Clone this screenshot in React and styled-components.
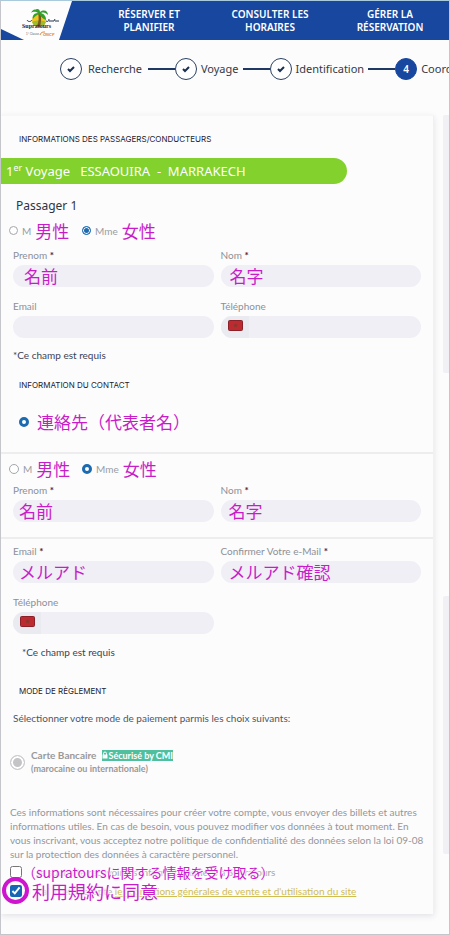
import React from 'react'
import styled, { createGlobalStyle, css } from 'styled-components'

const wide = '"Noto Sans", "Open Sans", sans-serif'
const cjk = '"Noto Sans CJK JP", sans-serif'
const pink = '#c81cc8'

const GlobalStyle = createGlobalStyle`
  * {
    box-sizing: border-box;
  }
  body {
    margin: 0;
    background: #fcfcfd;
    color: #3c4250;
    font-family: Lato, "Noto Sans CJK JP", sans-serif;
    font-size: 10px;
    line-height: 14px;
  }
  input, button {
    font-family: inherit;
    margin: 0;
  }
`

const Page = styled.div`
  min-height: 100vh;
  border: 1px solid #c4c6cb;
  border-top-color: #a9c9dc;
  overflow: hidden;
`

const Header = styled.header`
  display: flex;
  height: 39px;
  background: #17479e;
`

const Logo = styled.a`
  flex: none;
  width: 72px;
  svg {
    display: block;
  }
`

const Nav = styled.nav`
  flex: 1;
  display: grid;
  grid-template-columns: 152px 90px 1fr;
  align-items: center;
  a {
    color: #fff;
    font: 600 10px/13px ${wide};
    text-align: center;
    text-decoration: none;
    white-space: pre-line;
  }
  a:last-child {
    padding-left: 16px;
  }
`

const Steps = styled.ol`
  display: flex;
  align-items: center;
  height: 58px;
  margin: 0 0 17px;
  padding: 0 0 0 59px;
  list-style: none;
  overflow: hidden;
`

const Step = styled.li`
  flex: none;
  display: flex;
  align-items: center;
  gap: ${p => p.$gap || 4}px;
  font: 11px/16px ${wide};
  color: #333a48;
  &:not(:last-child)::after {
    content: '';
    width: 27px;
    height: 2px;
    background: #1f3864;
  }
`

const StepMark = styled.span`
  display: flex;
  align-items: center;
  justify-content: center;
  width: 22px;
  height: 22px;
  border: 1px solid #2b4160;
  border-radius: 50%;
  background: #fff;
  font-size: 10px;
  ${p => p.$active && css`
    border-color: #17479e;
    background: #17479e;
    color: #fff;
    font-weight: 600;
  `}
`

const Content = styled.main`
  display: grid;
  grid-template-columns: minmax(0, 1fr) 6px;
  column-gap: 9px;
`

const Card = styled.form`
  border-right: 1px solid #f1f1f4;
  border-top: 1px solid #f7f7f9;
  box-shadow: 0 2px 6px rgba(40, 40, 70, 0.12);
  background: #fcfcfd;
  padding-bottom: 14px;
`

const Aside = styled.aside`
  display: grid;
  grid-template-rows: 258px 258px;
  row-gap: 223px;
  div {
    background: #f0f0f5;
    border-radius: 2px 0 0 2px;
  }
`

const Section = styled.section`
  margin-top: ${p => p.$gap || 0}px;
  padding: ${p => p.$top || 0}px 12px 0;
  ${p => p.$divided && css`
    border-top: 2px solid #ededf0;
  `}
`

const Title = styled.h2`
  margin: 0;
  padding: ${p => p.$top || 0}px 6px 0;
  font: 8px/12px Inter, sans-serif;
  color: #1d2330;
  text-transform: uppercase;
`

const Banner = styled.h3`
  display: flex;
  align-items: center;
  width: 80%;
  height: 26px;
  margin: 13px 0 12px;
  padding-left: 5px;
  border-radius: 0 13px 13px 0;
  background: #82d12c;
  color: #fff;
  font: 13px/16px ${wide};
  white-space: pre;
  sup {
    font-size: 9px;
    line-height: 8px;
    align-self: flex-start;
    padding-top: 6px;
  }
`

const Passenger = styled.h4`
  margin: 0;
  padding: 0 3px;
  font: 12px/20px ${wide};
  color: #2e3440;
`

const RadioRow = styled.div`
  display: flex;
  align-items: center;
  height: 29px;
  margin: 0 0 ${p => p.$space || 0}px -4px;
  label {
    display: flex;
    align-items: center;
    width: 73px;
    gap: 4px;
    color: #999ca3;
    white-space: nowrap;
  }
`

const Radio = styled.input.attrs({ type: 'radio' })`
  appearance: none;
  flex: none;
  width: ${p => p.$size || 9}px;
  height: ${p => p.$size || 9}px;
  border: 1px solid ${p => p.$grey ? '#c9c9cc' : '#a3a6ab'};
  border-radius: 50%;
  background: #fff;
  &:checked {
    border-color: ${p => p.$grey ? '#c9c9cc' : '#1c6bb0'};
    background: ${p => p.$grey ? '#c4c4c7' : '#1c6bb0'};
    box-shadow: inset 0 0 0 ${p => p.$grey ? 2 : 1}px #fff;
  }
  ${p => p.$bold && css`
    &:checked {
      border-width: 3px;
      background: #fff;
      box-shadow: none;
    }
  `}
`

const Note = styled.span`
  color: ${pink};
  font-family: ${cjk};
  font-size: 17px;
  line-height: 20px;
  white-space: nowrap;
`

const Fields = styled.div`
  display: grid;
  grid-template-columns: repeat(2, minmax(0, 1fr));
  gap: 12px 7px;
`

const Field = styled.div`
  label {
    display: block;
    height: 17px;
    color: #8d9097;
    white-space: nowrap;
  }
  b {
    color: #5b1a26;
  }
`

const Pill = styled.div`
  display: flex;
  height: 22px;
  border-radius: 11px;
  background: #efeff5;
  overflow: hidden;
  input {
    flex: 1;
    min-width: 0;
    height: 22px;
    padding: 0 0 0 ${p => p.$inset || 6}px;
    border: 0;
    outline: 0;
    background: transparent;
    color: ${pink};
    font: 17px/22px ${cjk};
  }
`

const FlagButton = styled.button`
  display: flex;
  width: 28px;
  padding: 4px 0 0 7px;
  border: 0;
  background: #eaeaf1;
`

const Required = styled.p`
  margin: 0;
  padding: ${p => p.$indent ? '11px 9px 0' : '10px 0 0'};
  color: #3c4250;
`

const ContactChoice = styled.label`
  display: flex;
  align-items: center;
  gap: 8px;
  height: 20px;
  margin: 21px 0 20px 6px;
`

const Intro = styled.p`
  margin: 14px 0 23px;
  color: #50555f;
`

const Payment = styled.label`
  display: flex;
  align-items: center;
  gap: 6px;
  margin-left: -3px;
  font-weight: 700;
  color: #999;
  small {
    display: block;
    font-size: 9px;
    line-height: 14px;
  }
`

const Secure = styled.span`
  display: inline-flex;
  align-items: center;
  height: 11px;
  margin-left: 6px;
  background: #4fbf9d;
  color: #fff;
  font-size: 9px;
  line-height: 11px;
  white-space: nowrap;
`

const Legal = styled.p`
  margin: 29px 0 1px -3px;
  color: #94969b;
  white-space: pre;
`

const CheckRow = styled.div`
  position: relative;
  display: flex;
  align-items: center;
  gap: 14px;
  height: 19px;
  margin-left: -3px;
  color: #a4a6aa;
  white-space: nowrap;
  a {
    color: #d0bd52;
  }
`

const Checkbox = styled.input.attrs({ type: 'checkbox' })`
  width: 12px;
  height: 12px;
  accent-color: #1766b5;
`

const Overlay = styled.span`
  position: absolute;
  left: ${p => p.$left}px;
  top: 50%;
  transform: translateY(-50%);
  color: ${pink};
  font: ${p => p.$size}px/20px ${cjk};
  text-shadow: 0 0 2px #fff, 0 0 2px #fff, 0 0 3px #fff, 0 0 3px #fff;
  pointer-events: none;
`

const Ring = styled.span`
  position: absolute;
  left: -8px;
  top: -4px;
  width: 27px;
  height: 27px;
  border: 4px solid #cf14cf;
  border-radius: 50%;
  pointer-events: none;
`

const SupratoursLogo = () => (
  <svg width="72" height="39" viewBox="0 0 72 39" role="img" aria-label="Supratours">
    <path d="M0 0H71L58 39H23L0 28Z" fill="#fdfdfd" />
    <circle cx="38" cy="19" r="7" fill="#f3c521" />
    <path d="M31 21C34 19 42 19 45 21L43 25H33Z" fill="#9dbb2e" />
    <path d="M36 25C38 20 38 16 37 12L39 11C41 16 40 21 39 26Z" fill="#795a1d" />
    <path d="M38 12C35 7 32 8 30 12C33 10 35 11 37 12C33 12 31 15 32 18C34 15 36 14 38 13C40 16 42 18 45 19C45 15 43 13 40 12C43 11 45 12 47 14C47 10 43 8 39 11C39 8 36 7 34 9Z" fill="#34a02c" />
    <path d="M26 19C27 21 30 21 31 19M45 20C47 21 48 20 48 18M48 20H53L54 18M54 20H58" fill="none" stroke="#26344c" />
    <text x="21" y="27" fill="#17213b" fontFamily="Liberation Serif, serif" fontSize="6" fontWeight="700">Supratours</text>
    <text x="25" y="34" fill="#555f70" fontFamily="Liberation Sans, sans-serif" fontSize="3">1° Classe</text>
    <path d="M39 34C40 31 42 31 44 31" fill="none" stroke="#e07a2c" />
    <text x="42" y="35" fill="#e07a2c" fontFamily="Liberation Sans, sans-serif" fontSize="4" fontStyle="italic" fontWeight="700">ONCF</text>
  </svg>
)

const Check = () => (
  <svg width="8" height="8" viewBox="0 0 8 8">
    <path d="M1 4L3 6L7 2" fill="none" stroke="#1b2f50" strokeWidth="2" />
  </svg>
)

const Flag = () => (
  <svg width="15" height="11" viewBox="0 0 15 11">
    <rect x="0.5" y="0.5" width="14" height="10" rx="1" fill="#bd2a30" stroke="#8c2028" />
    <path d="M7.5 3.5L8.7 7L5.8 4.9H9.2L6.3 7Z" fill="none" stroke="#75402c" strokeWidth="0.5" />
  </svg>
)

const TextField = ({ id, label, required, value, inset, tel }) => (
  <Field>
    <label htmlFor={id}>{label} {required && <b>*</b>}</label>
    <Pill $inset={inset}>
      {tel && <FlagButton type="button" aria-label="Maroc"><Flag /></FlagButton>}
      <input id={id} type={tel ? 'tel' : 'text'} defaultValue={value} />
    </Pill>
  </Field>
)

const Gender = ({ name, bold, space }) => (
  <RadioRow $space={space}>
    <label><Radio name={name} $size={bold ? 10 : 9} />M <Note>男性</Note></label>
    <label><Radio name={name} $size={bold ? 10 : 9} $bold={bold} defaultChecked />Mme <Note>女性</Note></label>
  </RadioRow>
)

const legal = `Ces informations sont nécessaires pour créer votre compte, vous envoyer des billets et autres
informations utiles. En cas de besoin, vous pouvez modifier vos données à tout moment. En
vous inscrivant, vous acceptez notre politique de confidentialité des données selon la loi 09-08
sur la protection des données à caractère personnel.`

export default function App() {
  return (
    <Page>
      <GlobalStyle />
      <Header>
        <Logo href="#"><SupratoursLogo /></Logo>
        <Nav>
          <a href="#">{'RÉSERVER ET\nPLANIFIER'}</a>
          <a href="#">{'CONSULTER LES\nHORAIRES'}</a>
          <a href="#">{'GÉRER LA\nRÉSERVATION'}</a>
        </Nav>
      </Header>
      <Steps>
        <Step $gap={6}><StepMark><Check /></StepMark>Recherche</Step>
        <Step><StepMark><Check /></StepMark>Voyage</Step>
        <Step><StepMark><Check /></StepMark>Identification</Step>
        <Step><StepMark $active>4</StepMark>Coordonnées</Step>
      </Steps>
      <Content>
        <Card>
          <Section>
            <Title $top={17}>Informations des passagers/conducteurs</Title>
          </Section>
          <Banner>1<sup>er</sup> Voyage   ESSAOUIRA  -  MARRAKECH</Banner>
          <Section>
            <Passenger>Passager 1</Passenger>
            <Gender name="passenger-title" space={3} />
            <Fields>
              <TextField id="prenom" label="Prenom" required value="名前" inset={11} />
              <TextField id="nom" label="Nom" required value="名字" inset={9} />
              <TextField id="email" label="Email" />
              <TextField id="telephone" label="Téléphone" tel />
            </Fields>
            <Required>*Ce champ est requis</Required>
            <Title $top={17}>Information du contact</Title>
            <ContactChoice>
              <Radio name="contact" $size={10} $bold defaultChecked />
              <Note>連絡先（代表者名）</Note>
            </ContactChoice>
          </Section>
          <Section $divided>
            <Gender name="contact-title" bold />
            <Fields>
              <TextField id="contact-prenom" label="Prenom" required value="名前" />
              <TextField id="contact-nom" label="Nom" required value="名字" inset={8} />
            </Fields>
          </Section>
          <Section $divided $gap={15} $top={5}>
            <Fields>
              <TextField id="contact-email" label="Email" required value="メルアド" />
              <TextField id="contact-confirm" label="Confirmer Votre e-Mail" required value="メルアド確認" inset={8} />
              <TextField id="contact-telephone" label="Téléphone" tel />
            </Fields>
            <Required $indent>*Ce champ est requis</Required>
            <Title $top={26}>Mode de règlement</Title>
            <Intro>Sélectionner votre mode de paiement parmis les choix suivants:</Intro>
            <Payment>
              <Radio name="payment" $size={15} $grey defaultChecked />
              <span>
                Carte Bancaire
                <Secure>
                  <svg width="6" height="8" viewBox="0 0 6 8">
                    <path d="M1.5 4V2.5a1.5 1.5 0 0 1 3 0V4" fill="none" stroke="#fff" />
                    <rect x="0.5" y="3.5" width="5" height="4" fill="#fff" />
                  </svg>
                  Sécurisé by CMI
                </Secure>
                <small>(marocaine ou internationale)</small>
              </span>
            </Payment>
            <Legal>{legal}</Legal>
            <CheckRow>
              <Checkbox id="news" />
              <label htmlFor="news">Je souhaite recevoir les informations liées à Supratours</label>
              <Overlay $left={12} $size={14}>（supratoursに関する情報を受け取る）</Overlay>
            </CheckRow>
            <CheckRow>
              <Checkbox id="terms" defaultChecked />
              <label htmlFor="terms">J'ai lu et j'accepte <a href="#">les conditions générales de vente et d'utilisation du site</a></label>
              <Ring />
              <Overlay $left={22} $size={18}>利用規約に同意</Overlay>
            </CheckRow>
          </Section>
        </Card>
        <Aside>
          <div />
          <div />
        </Aside>
      </Content>
    </Page>
  )
}
